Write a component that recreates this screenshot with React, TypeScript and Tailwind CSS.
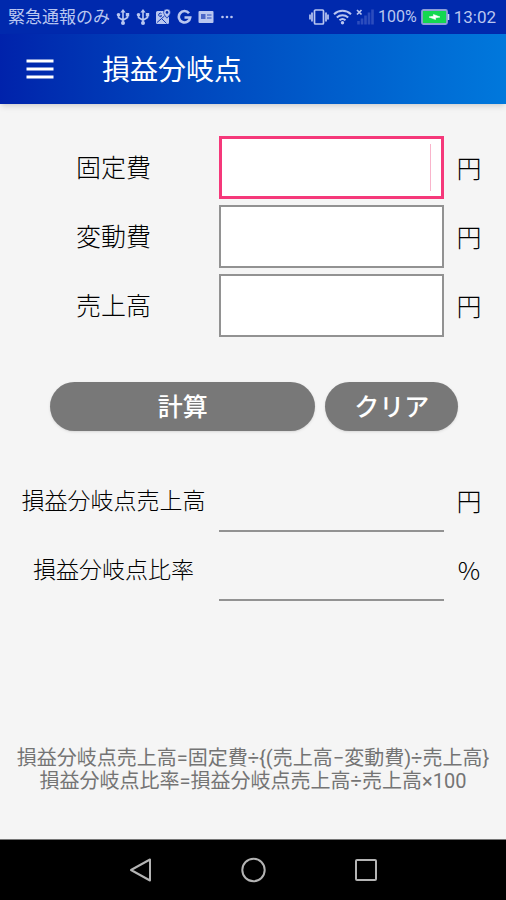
import React, { useState } from "react";

interface Field {
  id: string;
  label: string;
  unit: string;
}

const inputFields: Field[] = [
  { id: "fixed", label: "固定費", unit: "円" },
  { id: "variable", label: "変動費", unit: "円" },
  { id: "sales", label: "売上高", unit: "円" },
];

const resultFields: Field[] = [
  { id: "bepSales", label: "損益分岐点売上高", unit: "円" },
  { id: "bepRatio", label: "損益分岐点比率", unit: "%" },
];

const rowClass = "grid grid-cols-[211fr_225fr_50px] items-center font-light";
const labelClass = "pt-[3px] text-center";
const unitClass = "text-center font-['Noto_Sans_CJK_JP',sans-serif]";

const UsbIcon = () => (
  <svg width="14" height="16" viewBox="0 0 14 16" fill="none" stroke="currentColor" strokeWidth="1.6">
    <path d="M7 2.5v11M2.5 6v2.5L7 11.3M11.5 5.5v3L7 11.3" />
    <path d="M7 0l2.6 3.4H4.4z" fill="currentColor" stroke="none" />
    <circle cx="2.5" cy="5.8" r="1.8" fill="currentColor" stroke="none" />
    <path d="M9.8 4h3.4v3.4H9.8z" fill="currentColor" stroke="none" />
    <circle cx="7" cy="14" r="2" fill="currentColor" stroke="none" />
  </svg>
);

const MapIcon = () => (
  <svg width="15" height="16" viewBox="0 0 15 16">
    <path d="M1.5 2H7.5C7.5 5.5 9 7.5 11 9.5L13 7.5V13.5a1.5 1.5 0 0 1-1.5 1.5H1.5A1.5 1.5 0 0 1 0 13.5V3.5a1.5 1.5 0 0 1 1.5-1.5z" fill="currentColor" />
    <path d="M1 13.5L8.5 7M6 10l4.5 4.5M5.5 4.6a1.7 1.7 0 1 0 .3 2.2H4.2" fill="none" stroke="#0029ad" strokeWidth="0.9" />
    <path d="M11 0a3.4 3.4 0 0 1 3.4 3.4c0 2.3-3.4 5.4-3.4 5.4S7.6 5.7 7.6 3.4A3.4 3.4 0 0 1 11 0z" fill="currentColor" stroke="#0029ad" strokeWidth="0.5" />
    <circle cx="11" cy="3.4" r="1.3" fill="#0029ad" />
  </svg>
);

const GoogleIcon = () => (
  <svg width="15" height="16" viewBox="0 0 15 16" fill="none" stroke="currentColor" strokeWidth="2.6">
    <path d="M12 4.2A5.7 5.7 0 1 0 13.2 8.5H7.5" />
  </svg>
);

const NewsIcon = () => (
  <svg width="16" height="14" viewBox="0 0 16 14">
    <rect x="0.5" y="1" width="15" height="12" rx="1" fill="currentColor" />
    <path d="M3 4h4.5v5H3z" fill="#4a66c8" />
    <path d="M9 5h4.5M9 8h4.5" fill="none" stroke="#2b4dbd" strokeWidth="1" />
  </svg>
);

const DotsIcon = () => (
  <svg width="14" height="4" viewBox="0 0 14 4" fill="currentColor">
    <circle cx="2.5" cy="2" r="1.3" />
    <circle cx="7" cy="2" r="1.3" />
    <circle cx="11.5" cy="2" r="1.3" />
  </svg>
);

const VibrateIcon = () => (
  <svg width="20" height="16" viewBox="0 0 20 16" fill="none" stroke="currentColor" strokeWidth="1.7">
    <rect x="5.5" y="1" width="9" height="14" rx="1" />
    <path d="M3 3.5v9M1 5.5v5M17 3.5v9M19 5.5v5" />
  </svg>
);

const WifiIcon = () => (
  <svg width="19" height="16" viewBox="0 0 19 16" fill="none" stroke="currentColor" strokeWidth="2">
    <path d="M1 5.2a12.5 12.5 0 0 1 17 0M3.8 8.4a8.5 8.5 0 0 1 11.4 0M6.5 11.3a4.6 4.6 0 0 1 6 0" />
    <circle cx="9.5" cy="13.8" r="1.7" fill="currentColor" stroke="none" />
  </svg>
);

const SignalIcon = () => (
  <svg width="18" height="16" viewBox="0 0 18 16" fill="none">
    <path d="M2.5 12v3.5M6 9.5v6M9.5 6.5v9M13 3.5v12M16.5 0.5v15" stroke="#2c4dbd" strokeWidth="2.6" />
    <path d="M1 1l4.5 4.5M5.5 1L1 5.5" stroke="currentColor" strokeWidth="1.7" />
  </svg>
);

const BatteryIcon = () => (
  <svg width="29" height="16" viewBox="0 0 29 16">
    <rect x="1" y="1" width="25" height="14" rx="1.5" fill="#14d850" stroke="#8d9fd8" strokeWidth="1.8" />
    <path d="M27.5 5v6" stroke="#c9d3f2" strokeWidth="1.6" />
    <path d="M8 8l4.5-.8V5.5L19 8l-4.5.8v1.7z" fill="#fff" stroke="#fff" strokeWidth="0.6" />
  </svg>
);

const StatusBar = () => (
  <div className="flex h-[34px] items-center justify-between bg-[#0029ad] pl-2 pr-[10px] text-[17px] leading-none text-[#b9c6f0]">
    <div className="flex items-center gap-[6px]">
      <span>緊急通報のみ</span>
      <UsbIcon />
      <UsbIcon />
      <MapIcon />
      <GoogleIcon />
      <NewsIcon />
      <DotsIcon />
    </div>
    <div className="flex items-center gap-1">
      <VibrateIcon />
      <WifiIcon />
      <SignalIcon />
      <span className="text-[16px]">100%</span>
      <BatteryIcon />
      <span>13:02</span>
    </div>
  </div>
);

const NavBar = () => (
  <nav className="flex h-[61px] items-center justify-center gap-[88px] border-t border-[#777] bg-black text-[#b4b4b4]">
    <button type="button" aria-label="戻る">
      <svg width="24" height="24" viewBox="0 0 24 24" fill="none" stroke="currentColor" strokeWidth="2" strokeLinejoin="round">
        <path d="M22 1.5v21L3 12z" />
      </svg>
    </button>
    <button type="button" aria-label="ホーム">
      <svg width="26" height="26" viewBox="0 0 26 26" fill="none" stroke="currentColor" strokeWidth="2">
        <circle cx="13.5" cy="13" r="11.2" />
      </svg>
    </button>
    <button type="button" aria-label="履歴">
      <svg width="24" height="24" viewBox="0 0 24 24" fill="none" stroke="currentColor" strokeWidth="2" strokeLinejoin="round">
        <rect x="2" y="2" width="20" height="20" rx="1" />
      </svg>
    </button>
  </nav>
);

const App: React.FC = () => {
  const [values, setValues] = useState<Record<string, string>>({});
  const [results, setResults] = useState<Record<string, string>>({});
  const [activeId, setActiveId] = useState<string>("fixed");

  const handleSubmit = (e: React.FormEvent) => {
    e.preventDefault();
    const fixed = Number(values.fixed);
    const variable = Number(values.variable);
    const sales = Number(values.sales);
    if (!sales || sales === variable) return;

    const bep = fixed / ((sales - variable) / sales);
    setResults({
      bepSales: Math.round(bep).toString(),
      bepRatio: ((bep / sales) * 100).toFixed(1),
    });
  };

  const handleClear = () => {
    setValues({});
    setResults({});
    setActiveId("fixed");
  };

  return (
    <div className="flex min-h-screen flex-col bg-[#f5f5f5] font-[Roboto,'Noto_Sans_CJK_JP',sans-serif]" lang="ja">
      <StatusBar />

      {/* Header */}
      <header className="flex h-[70px] items-center bg-linear-to-r from-[#0022ab] to-[#0078dc] pl-[26px] text-white shadow-md">
        <button type="button" aria-label="メニュー">
          <svg width="28" height="20" viewBox="0 0 28 20" stroke="currentColor" strokeWidth="3">
            <path d="M0.5 2h27M0.5 10h27M0.5 18h27" />
          </svg>
        </button>
        <h1 className="ml-12 pt-1 text-[28px]">損益分岐点</h1>
      </header>

      <main className="flex flex-1 flex-col pt-8 text-[25px] text-black">
        <form onSubmit={handleSubmit}>
          <div className="flex flex-col gap-[6px] pl-2 pr-3">
            {inputFields.map((field) => (
              <div key={field.id} className={rowClass}>
                <label htmlFor={field.id} className={labelClass}>{field.label}</label>
                <div className="relative">
                  <input
                    id={field.id}
                    type="text"
                    inputMode="numeric"
                    value={values[field.id] || ""}
                    onFocus={() => setActiveId(field.id)}
                    onChange={(e) => setValues({ ...values, [field.id]: e.target.value })}
                    className={`block h-[63px] w-full bg-white px-3 text-right outline-none ${activeId === field.id ? "border-3 border-[#f5387a]" : "border-2 border-[#929292]"}`}
                  />
                  {activeId === field.id && !values[field.id] && (
                    <span className="absolute inset-y-2 right-[13px] w-px bg-[#f9b4cb]" />
                  )}
                </div>
                <span className={unitClass}>{field.unit}</span>
              </div>
            ))}
          </div>

          {/* Buttons */}
          <div className="mt-[45px] grid grid-cols-[2fr_1fr] gap-[10px] pl-[50px] pr-12 font-medium text-white">
            <button type="submit" className="h-[49px] rounded-full bg-[#787878] pt-[2px] shadow-sm">計算</button>
            <button type="button" onClick={handleClear} className="h-[49px] rounded-full bg-[#787878] pt-[2px] shadow-sm">クリア</button>
          </div>
        </form>

        {/* Results */}
        <div className="mt-[38px] flex flex-col gap-[6px] pl-2 pr-3">
          {resultFields.map((field) => (
            <div key={field.id} className={rowClass}>
              <label htmlFor={field.id} className={`${labelClass} text-[23px]`}>{field.label}</label>
              <input
                id={field.id}
                type="text"
                readOnly
                value={results[field.id] || ""}
                className="block h-[63px] w-full border-b-2 border-[#929292] bg-transparent px-3 text-right outline-none"
              />
              <span className={unitClass}>{field.unit}</span>
            </div>
          ))}
        </div>

        <p className="mt-auto pb-[46px] pt-6 text-center text-[20px] leading-[23px] text-[#747474]">
          損益分岐点売上高=固定費÷{"{"}(売上高−変動費)÷売上高{"}"}
          <br />
          損益分岐点比率=損益分岐点売上高÷売上高×100
        </p>
      </main>

      <NavBar />
    </div>
  );
};

export default App;
